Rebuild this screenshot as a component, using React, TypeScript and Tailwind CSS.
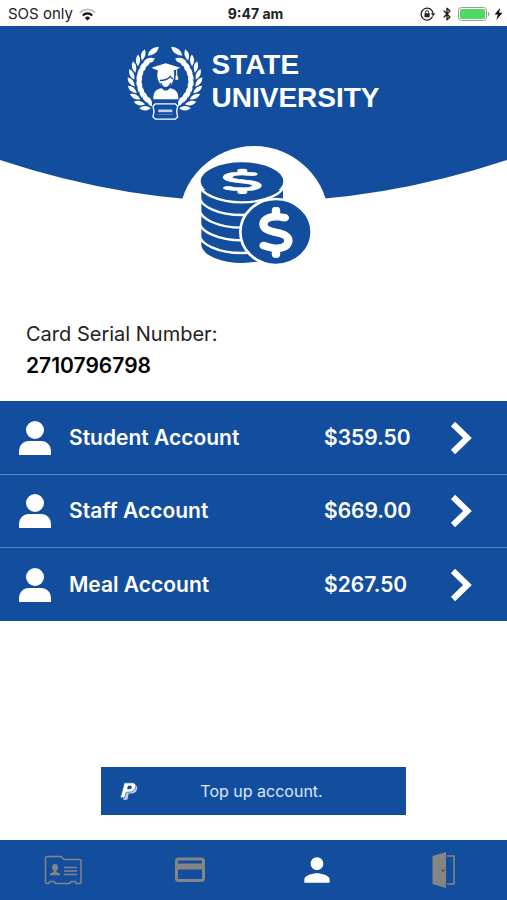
import React from 'react';
import { Bluetooth } from 'lucide-react';
import { FaDollarSign } from 'react-icons/fa6';
import { MdPerson } from 'react-icons/md';

interface Account {
  id: string;
  name: string;
  balance: string;
}

const accounts: Account[] = [
  { id: 'student', name: 'Student Account', balance: '$359.50' },
  { id: 'staff', name: 'Staff Account', balance: '$669.00' },
  { id: 'meal', name: 'Meal Account', balance: '$267.50' },
];

const StatusBar: React.FC = () => (
  <div className="grid grid-cols-[1fr_auto_1fr] items-center h-[26px] pl-2 pr-1 pt-0.5 bg-white text-[#222] text-[15px]">
    <div className="flex items-center gap-1.5">
      <span className="whitespace-nowrap">SOS only</span>
      <svg viewBox="0 0 17 13" className="w-[17px] h-[13px]" fill="none">
        <path d="M1 4.6a10.6 10.6 0 0 1 15 0" stroke="#c4c4c4" strokeWidth="2.2" />
        <path d="M3.8 7.4a6.6 6.6 0 0 1 9.4 0" stroke="#111" strokeWidth="2.2" />
        <path d="M8.5 12.6 5.9 9.9a3.7 3.7 0 0 1 5.2 0z" fill="#111" />
      </svg>
    </div>
    <span className="text-center text-sm font-bold">9:47 am</span>
    <div className="flex items-center justify-end gap-1">
      {/* Rotation lock */}
      <svg viewBox="0 0 16 14" className="w-4 h-3.5" fill="none">
        <path d="M12.6 9.6A6 6 0 1 1 13 6" stroke="#222" strokeWidth="1.3" />
        <path d="M10.8 6.2h4.6l-2.3 3z" fill="#222" />
        <rect x="4.5" y="6.3" width="5.2" height="4" rx=".5" fill="#222" />
        <path d="M5.5 6.5V5.2a1.6 1.6 0 0 1 3.2 0v1.3" stroke="#222" />
      </svg>
      <Bluetooth className="w-3.5 h-4 text-[#222]" strokeWidth={2.4} />
      <svg viewBox="0 0 32 14" className="w-8 h-3.5">
        <rect x=".5" y=".5" width="28" height="13" rx="3" fill="#fff" stroke="#999" />
        <rect x="2" y="2" width="25" height="10" rx="1.5" fill="#4cd964" />
        <path d="M30 4.8c1.8.6 1.8 3.8 0 4.4z" fill="#999" />
      </svg>
      <svg viewBox="0 0 9 14" className="w-[9px] h-3.5">
        <path d="M6.2.8.6 7.6h3.2L2.4 13 8.5 5.8H5.1z" fill="#111" />
      </svg>
    </div>
  </div>
);

// Rotation of each leaf pair round the crest, from the plaque up
const leafAngles = [-59, -46, -33, -20, -7, 6, 19, 32, 45];

const Branch: React.FC = () => (
  <g>
    {leafAngles.map((a) => (
      <g key={a} transform={`rotate(${a} 132 125)`}>
        <path d="M40 131Q19 123 22 101Q41 108 40 131Z" />
        <path d="M46 131Q43 109 63 99Q71 120 46 131Z" />
      </g>
    ))}
    <path d="M80 50Q85 24 114 23Q107 49 80 50Z" />
  </g>
);

const Crest: React.FC = () => (
  <svg viewBox="18 15 228 230" className="w-[76px] h-[77px] shrink-0" fill="#fff">
    <Branch />
    <g transform="translate(264 0) scale(-1 1)">
      <Branch />
    </g>
    {/* Graduate */}
    <path d="M97 180c-1-22 9-31 26-33 3 5 6 7 11 7s9-2 12-7c17 2 27 11 26 33z" />
    <path d="M134 72 91 86l20 8c-4 12-2 26 3 34 2 4 4 8 5 11 9 7 22 7 31 0 2-4 4-8 5-12 5-9 6-22 3-33l20-8z" />
    <path d="M117 124c12 0 24-4 31-12 2 4 5 6 8 7" fill="none" stroke="#134e9e" strokeWidth="4" />
    <path d="M119 132c3 10 9 14 15 14s12-4 16-14" fill="none" stroke="#134e9e" strokeWidth="5" />
    <path d="M167 90v22" stroke="#fff" strokeWidth="3" />
    <path d="M164 110h6l2 12h-9z" />
    {/* Plaque */}
    <path d="M103 194h60l7 7-3 16 3 16-7 7h-60l-7-7 3-16-3-16z" fill="#134e9e" stroke="#fff" strokeWidth="4" />
    <rect x="112" y="211" width="42" height="8" opacity=".75" />
    <path d="M110 226h46" stroke="#fff" strokeWidth="2" opacity=".4" />
  </svg>
);

// y position where each coin edge meets the side of the stack
const coinEdges = [144, 182, 220, 258, 296];

const Coins: React.FC = () => (
  <svg viewBox="93 78 333 312" className="w-[111px] h-[104px]">
    <path d="M97 165V332A123 57 0 0 0 342 332V165Z" fill="#134e9e" />
    {coinEdges.map((y) => (
      <path key={y} d={`M91 ${y}A128 58 0 0 0 347 ${y}`} fill="none" stroke="#fff" strokeWidth="7" />
    ))}
    <ellipse cx="219" cy="139" rx="124" ry="57" fill="#134e9e" />
    <ellipse cx="321" cy="291" rx="107" ry="99" fill="#134e9e" stroke="#fff" strokeWidth="8" />
    <FaDollarSign x="158" y="101" className="w-[124px] h-[76px]" preserveAspectRatio="none" fill="#fff" stroke="#fff" strokeWidth="12" />
    <FaDollarSign x="268" y="216" className="w-[106px] h-[152px]" preserveAspectRatio="none" fill="#fff" stroke="#fff" strokeWidth="12" />
  </svg>
);

const Header: React.FC = () => (
  <header>
    <div className="flex justify-center gap-2 h-[134px] pt-[18px] bg-[#134e9e] text-white">
      <Crest />
      <h1 className="pt-1 font-['Liberation_Sans',Arial,sans-serif] text-[28px] leading-[33px] font-bold">
        STATE
        <br />
        UNIVERSITY
      </h1>
    </div>
    <svg viewBox="0 0 507 42" preserveAspectRatio="none" className="block w-full h-[42px]">
      <path d="M0 0Q253 84 507 0Z" fill="#134e9e" />
    </svg>
    <div className="relative flex justify-center size-[150px] mx-auto -mt-14 pt-[15px] pl-1 rounded-full bg-white">
      <Coins />
    </div>
  </header>
);

const AccountRow: React.FC<{ account: Account }> = ({ account }) => (
  <li className="h-[73px]">
    <button className="flex items-center w-full h-full pl-[18px] pr-[34px] text-left text-white text-[21px] font-semibold">
      <svg viewBox="0 0 34 36" className="w-[34px] h-9 mr-[17px]" fill="currentColor">
        <circle cx="17" cy="10" r="9" />
        <path d="M1 35v-3c0-7 4-11 10-11h12c6 0 10 4 10 11v3z" />
      </svg>
      <span className="flex-1">{account.name}</span>
      <span className="w-[126px]">{account.balance}</span>
      <svg viewBox="0 0 23 34" className="w-[23px] h-[34px]" fill="none">
        <path d="M3 3l14.500 14L3 31" stroke="currentColor" strokeWidth="6" />
      </svg>
    </button>
  </li>
);

const PaypalMark: React.FC = () => (
  <svg viewBox="96 80 54 56" className="w-[18px] h-[19px] justify-self-center">
    <path d="M118 88h20c8 0 11 6 9 13-2 9-9 13-18 13h-7l-4 19h-13z" fill="#c3d5ee" />
    <path
      d="M109 82h23c10 0 13 6 11 13-2 10-9 15-19 15h-9l-5 17H97z"
      fill="#fff"
      stroke="#134e9e"
      strokeWidth="2"
    />
    <path d="M120 91h7c4 0 5 2 4 5-1 4-3 5-7 5h-7z" fill="#134e9e" />
  </svg>
);

const TabBar: React.FC = () => (
  <nav className="grid grid-cols-4 h-[60px] bg-[#134e9e] text-[#858585]">
    <a href="#id" aria-label="ID card" className="flex items-center justify-center">
      <svg viewBox="0 0 38 30" className="w-[38px] h-[30px]" fill="none" stroke="currentColor" strokeWidth="1.500">
        <path d="M3 1.500h14l3 3h15.500a1.500 1.500 0 0 1 1.500 1.500v21a1.500 1.500 0 0 1-1.500 1.500h-3l-1.500-2h-4l-1.500 2h-14l-1.500-2h-4l-1.500 2H3A1.500 1.500 0 0 1 1.500 27V3A1.500 1.500 0 0 1 3 1.500z" />
        <path d="M20 12.500h13M20 16h13M20 19.500h13" />
        <path d="M11 9c2 0 3 1.500 3 3.500 0 1.500-.7 2.500-1.500 3.300V17l3.500 1.500v1.800H6v-1.800L9.500 17v-1.200C8.700 15 8 14 8 12.500 8 10.500 9 9 11 9z" fill="currentColor" stroke="none" />
      </svg>
    </a>
    <a href="#card" aria-label="Payment card" className="flex items-center justify-center">
      <svg viewBox="0 0 32 26" className="w-8 h-[26px]" fill="none" stroke="currentColor">
        <rect x="2.500" y="2" width="27" height="21.500" rx="2" strokeWidth="3" />
        <path d="M2 9.500h28" stroke="currentColor" strokeWidth="6" />
      </svg>
    </a>
    <a href="#account" aria-label="Account" aria-current="page" className="flex items-center justify-center text-white">
      <MdPerson size={38} />
    </a>
    <a href="#exit" aria-label="Exit" className="flex items-center justify-center">
      <svg viewBox="0 0 24 38" className="w-6 h-[38px]">
        <path d="M.5 5 14 1v36L.5 33z" fill="currentColor" />
        <path d="M15 5h7v28h-7" fill="none" stroke="currentColor" strokeWidth="1.600" />
        <circle cx="11" cy="19.500" r="1.300" fill="#555" />
      </svg>
    </a>
  </nav>
);

export default function App() {
  return (
    <div className="flex flex-col min-h-screen bg-white font-['Inter',sans-serif]">
      <StatusBar />
      <Header />

      <main className="flex flex-col flex-1">
        <div className="px-[26px] pt-[23px] pb-5 text-[#222]">
          <p className="text-xl/[31px]">Card Serial Number:</p>
          <p className="text-[21px]/[31px] font-semibold text-black">2710796798</p>
        </div>

        <ul className="pt-px bg-[#134e9e] divide-y divide-[#5a86c4]">
          {accounts.map((account) => (
            <AccountRow key={account.id} account={account} />
          ))}
        </ul>

        <button className="grid grid-cols-[56px_1fr_40px] items-center w-3/5 h-12 mx-auto mt-auto mb-[25px] bg-[#134e9e] text-[#dde8f7]">
          <PaypalMark />
          <span className="text-base text-center">Top up account.</span>
        </button>
      </main>

      <TabBar />
    </div>
  );
}
